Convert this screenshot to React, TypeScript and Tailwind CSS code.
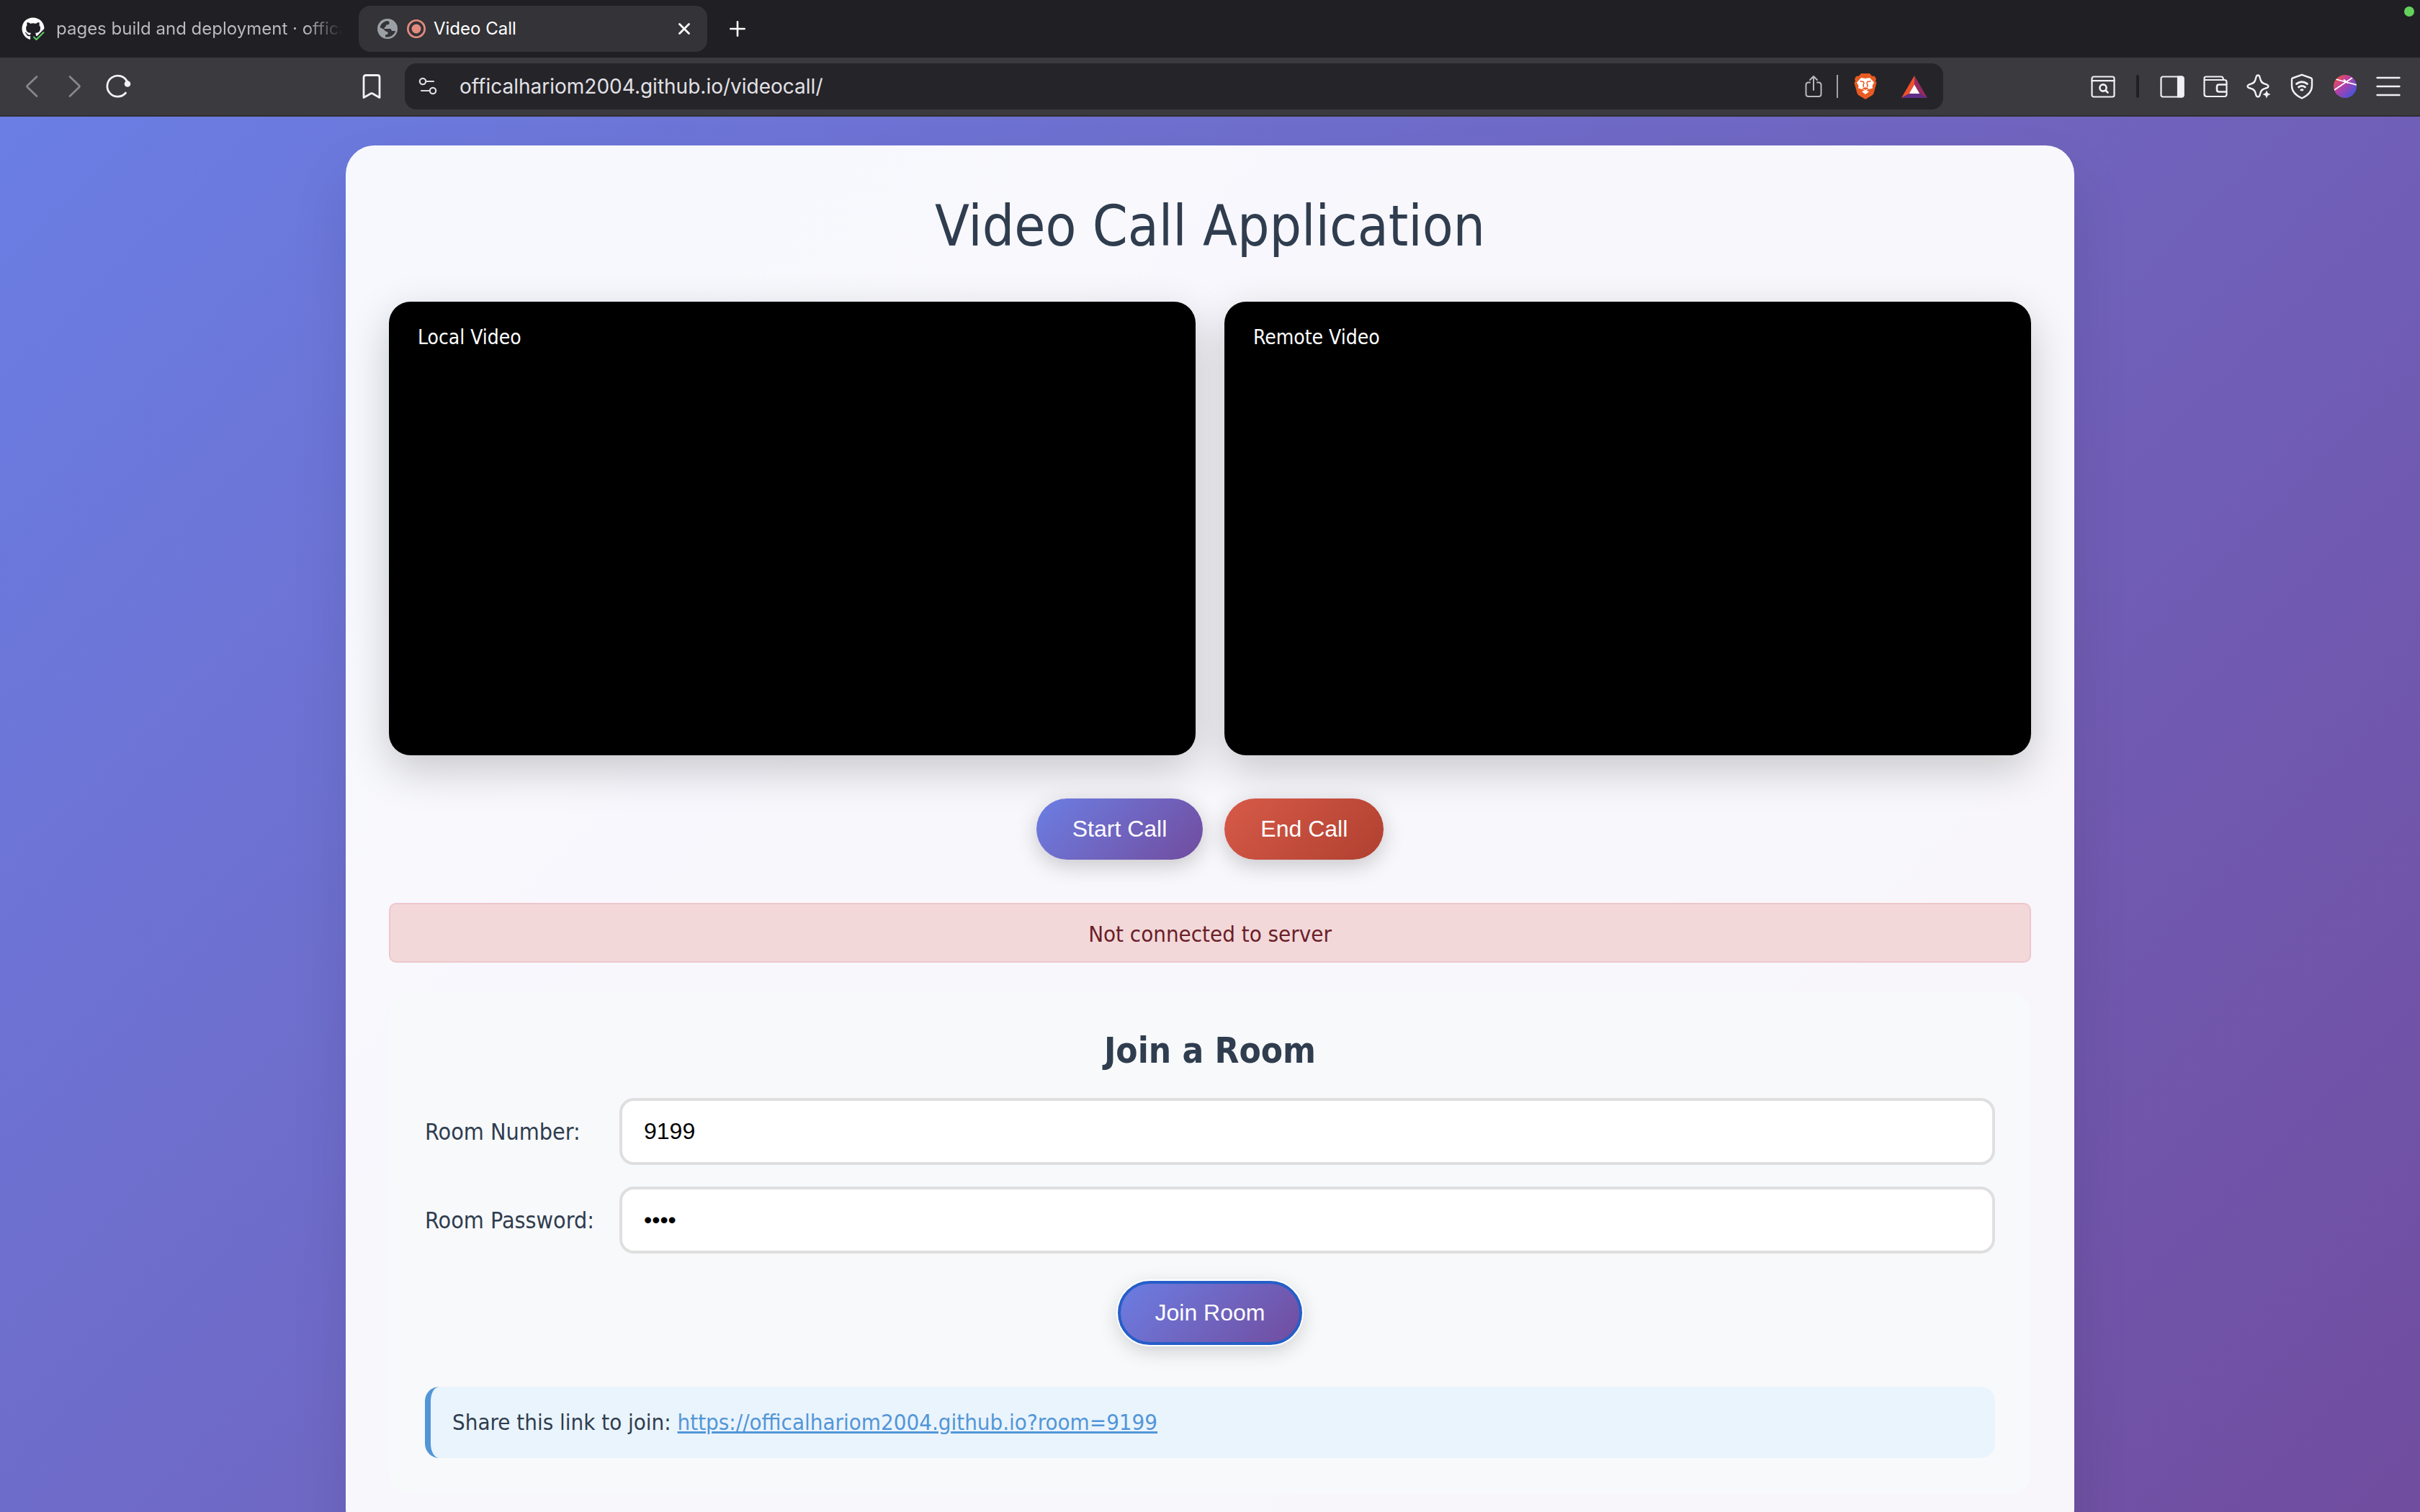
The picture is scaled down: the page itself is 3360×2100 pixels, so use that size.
import type { ReactNode } from "react";
import { FaGithub } from "react-icons/fa";

const line = { fill: "none", strokeLinecap: "round", strokeLinejoin: "round" } as const;

function GithubIcon() {
  return (
    <span className="relative block size-8">
      <FaGithub className="size-8 text-white" />
      <svg viewBox="0 0 32 32" className="absolute inset-0 size-8" {...line}>
        <path d="M17 25 21 29.500 34 16V34H15V27Z" fill="#201f24" stroke="#201f24" strokeWidth="4" />
        <path d="M17 27.500 20.500 31 30.500 21" stroke="#57d163" strokeWidth="2" />
      </svg>
    </span>
  );
}

function GlobeIcon() {
  return (
    <svg viewBox="0 0 28 28" className="size-7 shrink-0">
      <circle cx="14" cy="14" r="14" fill="#9aa0a6" />
      <path
        d="M3.500 12C4.800 7 9 3.300 14.500 3L16.500 4.500V7L14.500 8.500H12V10.500L9.500 12.500V14H18.500L20 17H25C24 21.500 19.500 25.300 14 25.500H11V22.500L14.500 21.500V18.500L11.500 17.500 8.500 14.500 3.500 12Z"
        fill="#343337"
      />
    </svg>
  );
}

function RecordIcon() {
  return (
    <svg viewBox="0 0 26 26" className="size-[26px] shrink-0">
      <circle cx="13" cy="13" r="11.700" fill="none" stroke="#e48b80" strokeWidth="2.600" />
      <circle cx="13" cy="13" r="6.500" fill="#e48b80" />
    </svg>
  );
}

function CloseIcon() {
  return (
    <svg viewBox="0 0 16 16" className="size-4" {...line} stroke="#fff" strokeWidth="2.800">
      <path d="M1.500 1.500 14.500 14.500M14.500 1.500 1.500 14.500" />
    </svg>
  );
}

function PlusIcon() {
  return (
    <svg viewBox="0 0 22 22" className="size-[22px]" {...line} stroke="#fff" strokeWidth="2.600">
      <path d="M11 1.300V20.700M1.300 11H20.700" />
    </svg>
  );
}

function BackIcon() {
  return (
    <svg viewBox="0 0 18 32" className="h-8 w-[18px]" {...line} stroke="#87868b" strokeWidth="2.800">
      <path d="M16 2.500 3.200 14.800Q2 16 3.200 17.200L16 29.500" />
    </svg>
  );
}

function ForwardIcon() {
  return (
    <svg viewBox="0 0 18 32" className="h-8 w-[18px]" {...line} stroke="#87868b" strokeWidth="2.800">
      <path d="M2 2.500 14.800 14.800Q16 16 14.800 17.200L2 29.500" />
    </svg>
  );
}

function ReloadIcon() {
  return (
    <svg viewBox="0 0 36 36" className="size-9" {...line} stroke="#f1f1f4" strokeWidth="2.800">
      <path d="M28.500 27A14.500 14.500 0 1 1 30.500 11.500" />
      <circle cx="31" cy="14.500" r="4.300" fill="#f1f1f4" stroke="none" />
      <path d="M29.500 10 32 13" />
    </svg>
  );
}

function BookmarkIcon() {
  return (
    <svg viewBox="0 0 26 36" className="h-9 w-[26px]" {...line} stroke="#f1f1f4" strokeWidth="2.800">
      <path d="M5 2.500H21Q24 2.500 24 5.500V33.500L13.900 27.800Q13 27.300 12.100 27.800L2 33.500V5.500Q2 2.500 5 2.500Z" />
    </svg>
  );
}

function SiteSettingsIcon() {
  return (
    <svg viewBox="0 0 26 26" className="size-[26px] shrink-0" {...line} stroke="#dcdbe0" strokeWidth="2.200">
      <circle cx="6" cy="6" r="4.200" />
      <path d="M10.500 6H21" />
      <circle cx="20" cy="19" r="4.200" />
      <path d="M4 19H15.500" />
    </svg>
  );
}

function ShareIcon() {
  return (
    <svg viewBox="0 0 24 32" className="h-8 w-6" {...line} stroke="#b9b8be" strokeWidth="2">
      <path d="M12 21V2.500M7 7 12 2 17 7M7 10.500H5Q1.500 10.500 1.500 14V26.500Q1.500 30 5 30H19Q22.500 30 22.500 26.500V14Q22.500 10.500 19 10.500H17" />
    </svg>
  );
}

function BraveIcon() {
  return (
    <svg viewBox="0 0 32 36" className="h-9 w-8">
      <path d="M10 0H22L25 3.500 29 4 31 8 30 10.500 31.500 13 27.500 27.500Q27 29.200 25.500 30.200L16 36 6.500 30.200Q5 29.200 4.500 27.500L.5 13 2 10.500 1 8 3 4 7 3.500Z" fill="#e85b22" />
      <path d="M10 6 16 7 22 6 28 12.500 25.500 17 26 20.500 20.500 22 16 24 11.500 22 6 20.500 6.500 17 4 12.500Z" fill="#fff" />
      <path d="M8.500 10.800 13.200 11.500 14 13.200 12.800 17 14 19.500M23.500 10.800 18.800 11.500 18 13.200 19.200 17 18 19.500M12 21.800 16 20 20 21.800M16 20V23.500" fill="none" stroke="#e85b22" strokeWidth="1.500" />
      <path d="M16 23 21 25.300 16 29 11 25.300Z" fill="#fff" />
    </svg>
  );
}

function RewardsIcon() {
  return (
    <svg viewBox="0 0 36 31" className="h-[31px] w-9">
      <path d="M18 0V13L11 25 0 31Z" fill="#f0502d" />
      <path d="M18 0 36 31 25 25 18 13Z" fill="#952b61" />
      <path d="M0 31 11 25H25L36 31Z" fill="#5f2f88" />
      <path d="M18 12.500 25.200 25H10.800Z" fill="#fff" />
    </svg>
  );
}

function PageSearchIcon() {
  return (
    <svg viewBox="0 0 34 34" className="size-[34px]" {...line} stroke="#f1f1f4" strokeWidth="2.200">
      <rect x="1.500" y="3.500" width="31" height="28" rx="2.500" />
      <path d="M1.500 9.200H32.500" />
      <circle cx="17" cy="19" r="4.600" strokeWidth="2.600" />
      <path d="M20.500 22.500 23.500 25.500" strokeWidth="2.600" />
    </svg>
  );
}

function SidebarIcon() {
  return (
    <svg viewBox="0 0 34 34" className="size-[34px]" {...line} stroke="#f1f1f4" strokeWidth="2.200">
      <rect x="1.500" y="3.500" width="31" height="28" rx="2.500" />
      <path d="M25 3.500H30Q32.500 3.500 32.500 6V29Q32.500 31.500 30 31.500H25Z" fill="#f1f1f4" />
    </svg>
  );
}

function WalletIcon() {
  return (
    <svg viewBox="0 0 34 34" className="size-[34px]" {...line} stroke="#f1f1f4" strokeWidth="2.200">
      <path d="M1.500 7V27.500Q1.500 31 5 31H29.500Q32.500 31 32.500 28V11Q32.500 8 29.500 8H3Q1.500 8 1.500 6Q1.500 3.500 4 3.500H25Q28 3.500 28 8" />
      <path d="M32 14.500H22Q19 14.500 19 17.500V21.500Q19 24.500 22 24.500H32" strokeWidth="2.600" />
    </svg>
  );
}

function SparkleIcon() {
  return (
    <svg viewBox="0 0 34 36" className="h-9 w-[34px]" {...line} stroke="#f1f1f4" strokeWidth="2.400">
      <path d="M16 2.500Q17.800 2.500 18.500 5L19.800 9.500Q21 13 24.500 14.200L28.500 15.500Q30.500 16.300 30.500 17.800Q30.500 19.300 28.500 20L24.500 21.300Q21 22.500 19.800 26L18.500 30.500Q17.800 32.500 16 32.500Q14.200 32.500 13.500 30.500L12.200 26Q11 22.500 7.500 21.300L3.500 20Q1.500 19.300 1.500 17.800Q1.500 16.300 3.500 15.500L7.500 14.200Q11 13 12.200 9.500L13.500 5Q14.200 2.500 16 2.500Z" />
      <path d="M28 23.500 29.700 27.300 33.500 29 29.700 30.700 28 34.500 26.300 30.700 22.500 29 26.300 27.300Z" fill="#f1f1f4" stroke="#3b3a3f" strokeWidth="1" paintOrder="stroke" />
    </svg>
  );
}

function VpnIcon() {
  return (
    <svg viewBox="0 0 32 36" className="h-9 w-8" {...line} stroke="#f1f1f4" strokeWidth="2.400">
      <path d="M16 1.800 29 6.500Q30 7 30 8V17Q30 28 16 34.500Q2 28 2 17V8Q2 7 3 6.500Z" />
      <path d="M8.500 14.500Q16 9 23.500 14.500M11.500 19Q16 15.700 20.500 19" strokeWidth="2.800" />
      <ellipse cx="16" cy="22.800" rx="2.600" ry="1.600" fill="#f1f1f4" stroke="none" />
    </svg>
  );
}

function ProfileIcon() {
  return (
    <svg viewBox="0 0 32 32" className="size-8">
      <defs>
        <linearGradient id="profile" x1="0.050" y1="0.100" x2="0.900" y2="0.900">
          <stop offset="0" stopColor="#f0563c" />
          <stop offset="0.400" stopColor="#bb3fa5" />
          <stop offset="1" stopColor="#3f56df" />
        </linearGradient>
        <clipPath id="profile-disc">
          <circle cx="16" cy="16" r="16" />
        </clipPath>
      </defs>
      <circle cx="16" cy="16" r="16" fill="url(#profile)" />
      <path d="M3 6 32 14M1 21 26 4M14 6.500 20 11.500" stroke="#fff" strokeWidth="1.800" clipPath="url(#profile-disc)" />
    </svg>
  );
}

function MenuIcon() {
  return (
    <svg viewBox="0 0 34 34" className="size-[34px]" {...line} stroke="#f1f1f4" strokeWidth="2.400">
      <path d="M1.500 5H32.500M1.500 17H32.500M1.500 29H32.500" />
    </svg>
  );
}

function IconButton({ label, children }: { label: string; children: ReactNode }) {
  return (
    <button type="button" aria-label={label} className="flex h-12 w-[60px] shrink-0 items-center justify-center">
      {children}
    </button>
  );
}

function TabStrip() {
  return (
    <div className="flex h-20 shrink-0 items-center bg-[#201f24] pr-2 text-2xl">
      <div className="flex w-[498px] items-center gap-4 pl-[30px]">
        <span className="shrink-0"><GithubIcon /></span>
        <span className="bg-linear-to-r from-[#bdbcc0] from-85% to-transparent to-98% bg-clip-text whitespace-nowrap text-transparent">
          pages build and deployment · offica
        </span>
      </div>
      <div className="flex h-16 w-[484px] items-center rounded-2xl bg-[#343337] pr-6 pl-[26px] text-white">
        <GlobeIcon />
        <span className="ml-[13px]"><RecordIcon /></span>
        <span className="ml-[11px] flex-1">Video Call</span>
        <button type="button" aria-label="Close tab"><CloseIcon /></button>
      </div>
      <button type="button" aria-label="New tab" className="ml-[31px]"><PlusIcon /></button>
      <span className="mb-12 ml-auto size-3.5 rounded-full bg-[#62d25c]" />
    </div>
  );
}

function Toolbar() {
  return (
    <div className="flex h-[82px] shrink-0 items-center border-b-2 border-[#2f2e33] bg-[#3b3a3f] px-3.5">
      <IconButton label="Back"><BackIcon /></IconButton>
      <IconButton label="Forward"><ForwardIcon /></IconButton>
      <IconButton label="Reload"><ReloadIcon /></IconButton>
      <div className="mr-4 ml-[292px]">
        <IconButton label="Bookmark"><BookmarkIcon /></IconButton>
      </div>
      <div className="flex h-16 flex-1 items-center rounded-2xl bg-[#252429] pr-[22px] pl-[19px]">
        <SiteSettingsIcon />
        <input
          aria-label="Address"
          readOnly
          defaultValue="officalhariom2004.github.io/videocall/"
          className="ml-[31px] h-12 min-w-0 flex-1 bg-transparent text-[28px] text-[#e2e1e6] outline-none"
        />
        <button type="button" aria-label="Share"><ShareIcon /></button>
        <span className="mr-[22px] ml-5 h-8 w-0.5 bg-[#a5a4aa]" />
        <button type="button" aria-label="Shields"><BraveIcon /></button>
        <button type="button" aria-label="Rewards" className="ml-[34px]"><RewardsIcon /></button>
      </div>
      <div className="ml-48 flex items-center">
        <IconButton label="Search page"><PageSearchIcon /></IconButton>
        <span className="mx-4 h-8 w-1 rounded-full bg-[#201f24]" />
        <IconButton label="Sidebar"><SidebarIcon /></IconButton>
        <IconButton label="Wallet"><WalletIcon /></IconButton>
        <IconButton label="Assistant"><SparkleIcon /></IconButton>
        <IconButton label="VPN"><VpnIcon /></IconButton>
        <IconButton label="Profile"><ProfileIcon /></IconButton>
        <IconButton label="Menu"><MenuIcon /></IconButton>
      </div>
    </div>
  );
}

function VideoTile({ label }: { label: string }) {
  return (
    <div className="aspect-video rounded-[30px] bg-black px-10 py-[33px] text-[28px] leading-[34px] text-white shadow-[0_20px_60px_rgba(0,0,0,0.2)]">
      {label}
    </div>
  );
}

const pill =
  "rounded-full px-[50px] py-6 font-['Liberation_Sans',sans-serif] text-[32px] leading-[37px] text-white";

function Field({ id, label, type, value }: { id: string; label: string; type: string; value: string }) {
  return (
    <div className="mb-[30px] flex items-center">
      <label htmlFor={id} className="w-[270px] shrink-0 pt-0.5 text-[32px]">{label}</label>
      <input
        id={id}
        type={type}
        defaultValue={value}
        className="h-[93px] min-w-0 flex-1 rounded-[20px] border-4 border-[#dfdfdf] bg-white px-[30px] font-['Liberation_Sans',sans-serif] text-[32px] text-black outline-none"
      />
    </div>
  );
}

export default function App() {
  return (
    <div className="flex h-screen flex-col overflow-hidden font-['Inter',sans-serif]">
      <TabStrip />
      <Toolbar />
      <main className="shrink-0 bg-linear-135 from-[#6a7ee4] to-[#704c9e] p-10 font-['DejaVu_Sans_Condensed','DejaVu_Sans',sans-serif] text-[31px] leading-[39px] text-[#2f3d4f] [font-stretch:condensed]">
        <div className="mx-auto max-w-[2400px] rounded-[40px] bg-white/95 p-[60px] shadow-[0_40px_80px_rgba(0,0,0,0.1)]">
          <h1 className="mb-14 pt-1 text-center text-[78px] leading-[97px]">Video Call Application</h1>
          <div className="grid grid-cols-2 gap-10">
            <VideoTile label="Local Video" />
            <VideoTile label="Remote Video" />
          </div>
          <div className="my-[60px] flex justify-center gap-[30px]">
            <button type="button" className={`${pill} bg-linear-135 from-[#6a7ee4] to-[#704c9e] shadow-[0_8px_30px_rgba(0,0,0,0.2)]`}>
              Start Call
            </button>
            <button type="button" className={`${pill} bg-linear-135 from-[#d75a48] to-[#b04030] shadow-[0_8px_30px_rgba(0,0,0,0.2)]`}>
              End Call
            </button>
          </div>
          <p className="mb-10 rounded-[10px] border-2 border-[#eec7cb] bg-[#f3d8da] pt-[22px] pb-[18px] text-center text-[#6a2027]">
            Not connected to server
          </p>
          <form className="rounded-[30px] bg-[#f8f9fb] p-[50px]">
            <h2 className="mb-9 pt-1 text-center text-[49px] leading-[58px] font-bold">Join a Room</h2>
            <Field id="room-number" label="Room Number:" type="text" value="9199" />
            <Field id="room-password" label="Room Password:" type="password" value="9199" />
            <div className="mt-10 flex justify-center">
              <button
                type="button"
                className={`${pill} bg-linear-135 from-[#6a7ee4] to-[#704c9e] shadow-[0_0_0_4px_#fff,0_8px_30px_rgba(0,0,0,0.2)] outline-4 -outline-offset-2 outline-[#265ec8]`}
              >
                Join Room
              </button>
            </div>
            <p className="mt-[60px] rounded-[20px] border-l-8 border-[#5296d8] bg-[#eaf4fc] p-[30px]">
              Share this link to join:{" "}
              <a href="https://officalhariom2004.github.io?room=9199" className="text-[#5296d8] underline">
                https://officalhariom2004.github.io?room=9199
              </a>
            </p>
          </form>
        </div>
      </main>
    </div>
  );
}
